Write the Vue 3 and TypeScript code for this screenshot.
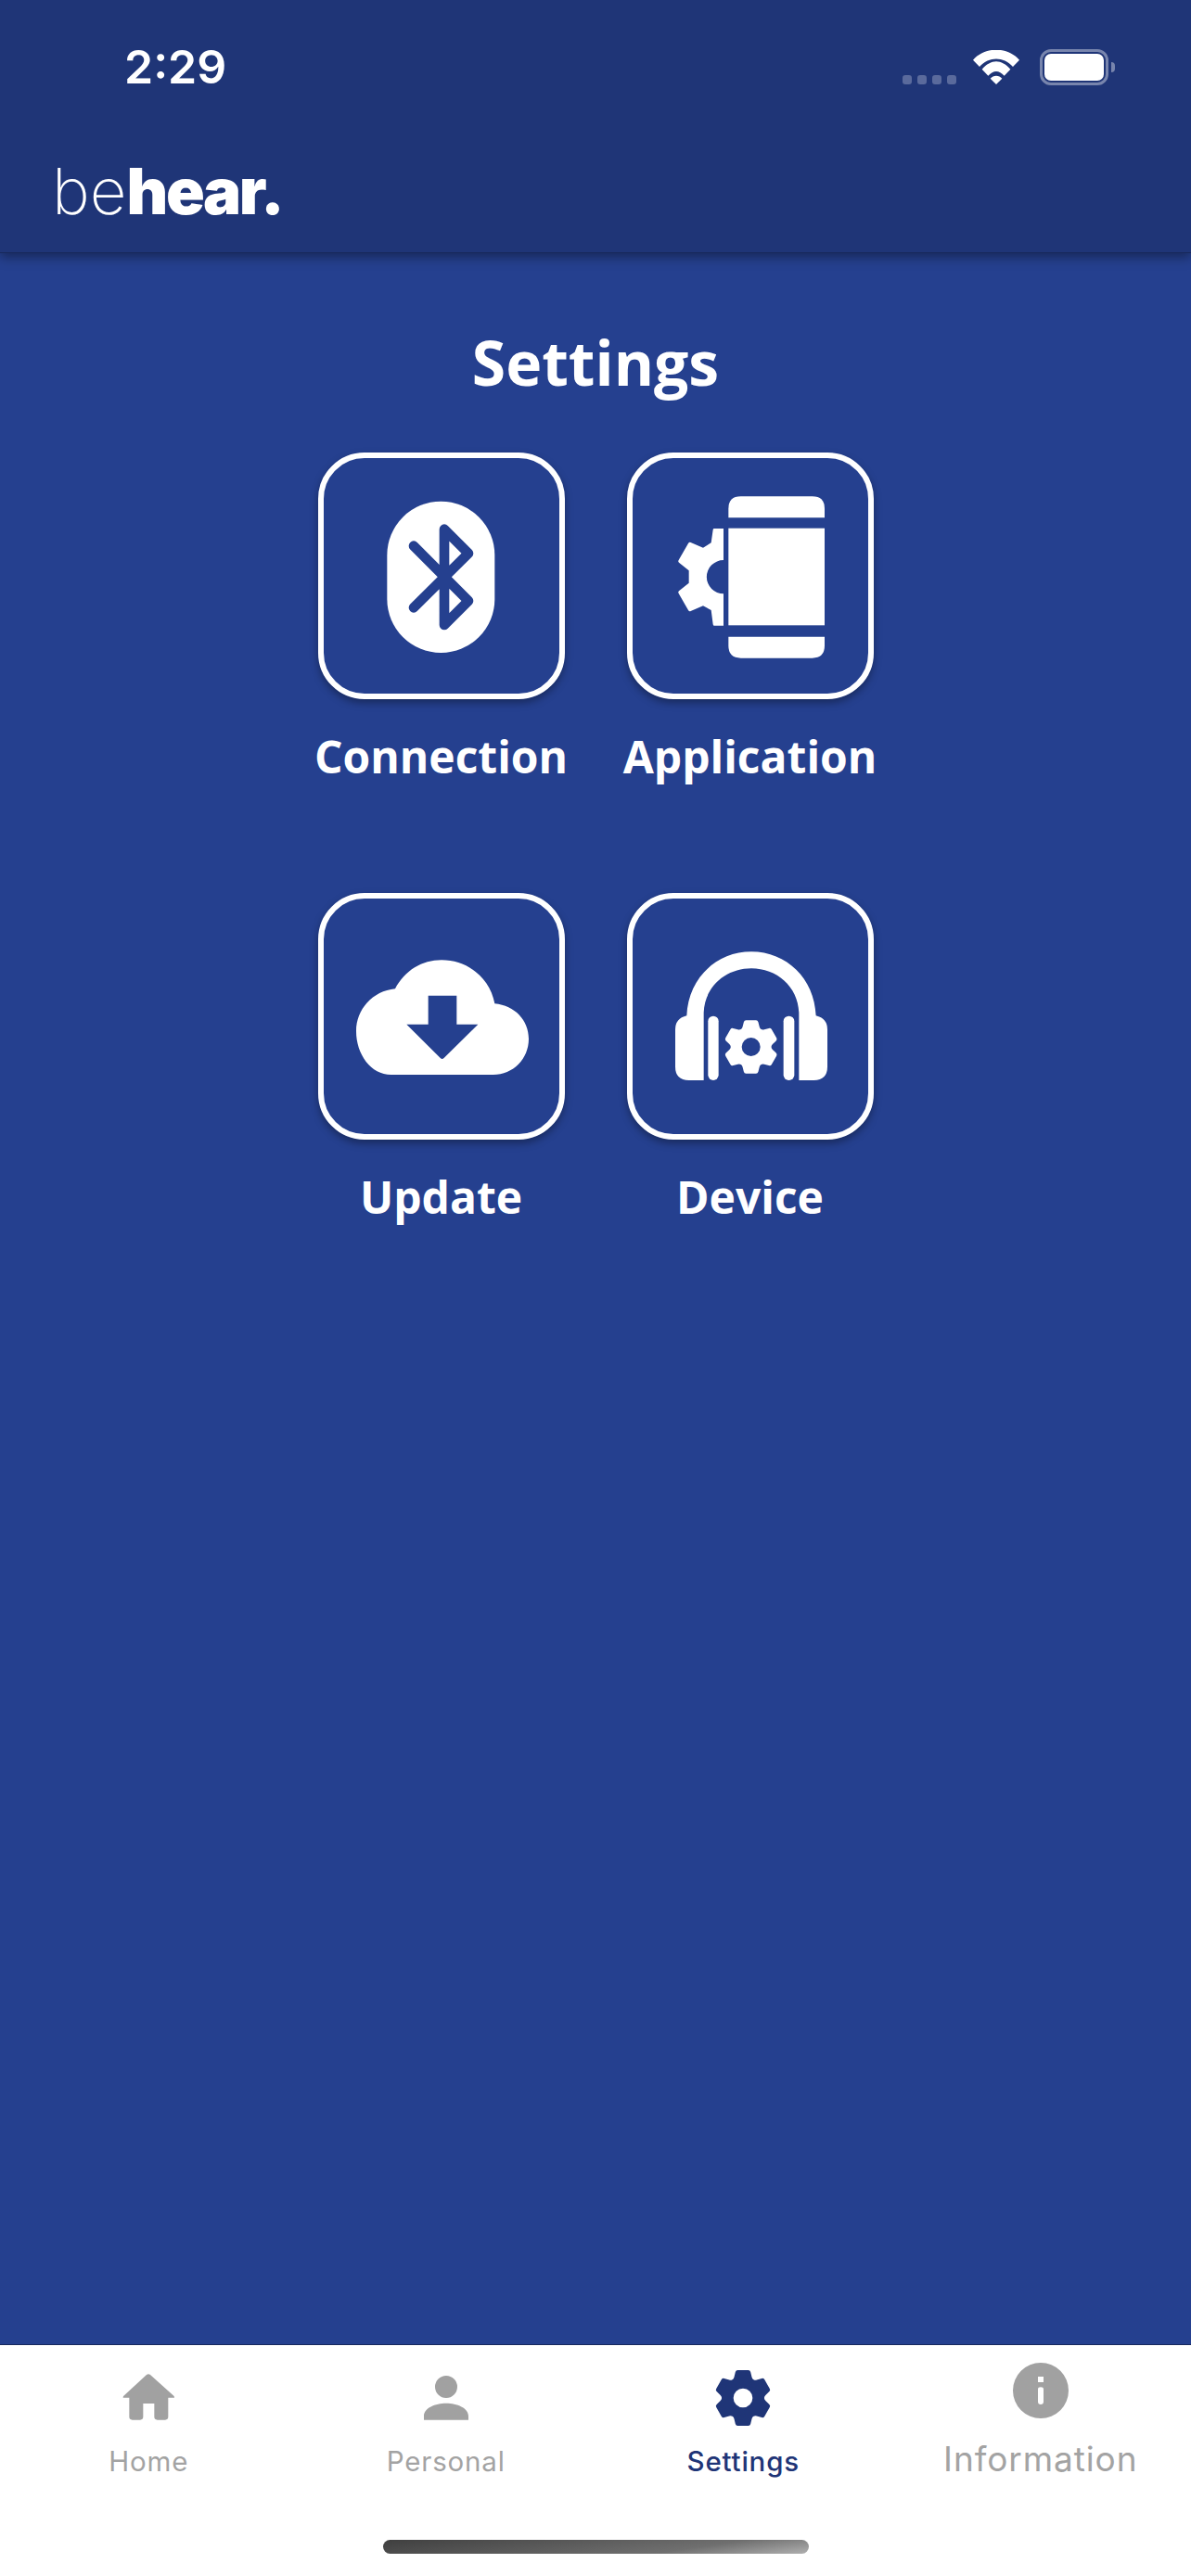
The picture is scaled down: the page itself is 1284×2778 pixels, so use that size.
<script setup lang="ts">
type Pt = [number, number]

// polygon with softened corners, the gears look too sharp without it
function roundedPoly(pts: Pt[], r: number): string {
  let d = ''
  pts.forEach((p, i) => {
    const prev = pts[(i + pts.length - 1) % pts.length]
    const next = pts[(i + 1) % pts.length]
    const toward = (q: Pt): Pt => {
      const len = Math.hypot(q[0] - p[0], q[1] - p[1])
      const k = Math.min(r, len / 2) / len
      return [p[0] + (q[0] - p[0]) * k, p[1] + (q[1] - p[1]) * k]
    }
    const a = toward(prev)
    const b = toward(next)
    d += `${i ? 'L' : 'M'}${a[0].toFixed(1)} ${a[1].toFixed(1)}Q${p[0]} ${p[1]} ${b[0].toFixed(1)} ${b[1].toFixed(1)}`
  })
  return d + 'Z'
}

function circlePath(cx: number, cy: number, r: number): string {
  return `M${cx - r} ${cy}A${r} ${r} 0 1 0 ${cx + r} ${cy}A${r} ${r} 0 1 0 ${cx - r} ${cy}Z`
}

function gearPath(cx: number, cy: number, size: number, hole: number): string {
  const pts: Pt[] = []
  for (let k = 0; k < 6; k++) {
    const a = (k * Math.PI) / 3
    const local: Pt[] = [[-30, -62], [-23, -90], [23, -90], [30, -62]]
    for (const [x, y] of local) {
      const sx = x * size
      const sy = y * size
      pts.push([
        +(cx + sx * Math.cos(a) - sy * Math.sin(a)).toFixed(1),
        +(cy + sx * Math.sin(a) + sy * Math.cos(a)).toFixed(1),
      ])
    }
  }
  return roundedPoly(pts, 6) + circlePath(cx, cy, hole)
}

const tabs = [
  {
    label: 'Home',
    view: '101 39 216 216',
    d: 'M203 78Q209 73 215 78L291 146Q296 152 290 152H273V214Q273 224 263 224H238Q228 224 228 214V171H192V214Q192 224 182 224H157Q147 224 147 214V152H130Q124 152 129 146Z',
    cls: '',
  },
  {
    label: 'Personal',
    view: '1062 39 216 216',
    d: circlePath(1170, 117, 36) + 'M1098 224V212C1098 185 1135 170 1170 170C1205 170 1242 185 1242 212V224Z',
    cls: '',
  },
  {
    label: 'Settings',
    view: '107 39 216 216',
    d: gearPath(215, 153, 1, 31),
    cls: 'tab-active',
  },
  {
    label: 'Information',
    view: '1068 39 216 216',
    d: circlePath(1176, 129, 90) + 'M1167 84H1185V102H1167ZM1167 125Q1167 118 1176 118Q1185 118 1185 125V165Q1185 174 1176 174Q1167 174 1167 165Z',
    cls: 'tab-wide',
  },
]

const headGear = gearPath(413, 506, 0.955, 30)
</script>

<template>
  <div class="screen">
    <header class="top">
      <div class="status">
        <span class="time">2:29</span>
        <div class="status-right">
          <div class="signal"><i /><i /><i /><i /></div>
          <svg class="wifi" viewBox="302 72 150 111">
            <path d="M302 104C340 60 414 60 452 104L431 126C400 92 354 92 323 126Z" />
            <path d="M331 134C360 100 394 100 423 134L403 155C386 136 368 136 351 155Z" />
            <path d="M358 164C368 152 386 152 396 164L377 183Z" />
          </svg>
          <div class="battery"><div class="battery-fill" /></div>
          <div class="battery-nub" />
        </div>
      </div>
      <div class="logo"><span class="logo-thin">be</span><span class="logo-bold">hear.</span></div>
    </header>

    <main class="content">
      <h1 class="title">Settings</h1>
      <div class="grid">
        <div class="item">
          <div class="card">
            <svg viewBox="27 28 762 762">
              <rect x="232" y="168" width="348" height="490" rx="174" fill="#fff" />
              <path
                d="M318 312L495 490L417 568V258L495 336L318 512"
                fill="none"
                stroke="#25408f"
                stroke-width="32"
                stroke-linecap="round"
                stroke-linejoin="round"
              />
            </svg>
          </div>
          <span class="label">Connection</span>
        </div>

        <div class="item">
          <div class="card">
            <svg viewBox="30 28 762 762" fill="#fff">
              <path d="M340 221V192Q340 152 380 152H611Q651 152 651 192V221Z" />
              <rect x="340" y="255" width="311" height="314" />
              <path d="M340 606H651V635Q651 675 611 675H380Q340 675 340 635Z" />
              <path d="M324 256H293Q291 256 290 260L284 302L258 318L218 301Q213 299 210 304L179 358Q176 363 180 366L212 392V432L180 458Q176 461 179 466L210 520Q213 525 218 523L258 506L284 520L290 566Q291 570 293 570H324V467A54 54 0 0 1 324 358Z" />
            </svg>
          </div>
          <span class="label">Application</span>
        </div>

        <div class="item">
          <div class="card">
            <svg viewBox="27 26 762 762">
              <path
                fill="#fff"
                d="M258 318C290 258 345 225 408 225C495 225 565 285 580 366C645 372 690 420 690 480C690 545 640 596 575 596H245C180 596 132 530 132 455C132 385 185 325 258 318Z"
              />
              <path fill="#25408f" d="M365 340H457V433H526L415 543Q410 547 405 543L295 433H365Z" />
            </svg>
          </div>
          <span class="label">Update</span>
        </div>

        <div class="item">
          <div class="card">
            <svg viewBox="30 26 762 762" fill="#fff">
              <path d="M260 614H212Q168 614 168 570V450Q168 414 205 405C210 285 300 198 414 198C528 198 618 285 623 405Q660 414 660 450V570Q660 614 616 614H568V395C565 310 495 252 414 252C333 252 263 310 260 395Z" />
              <rect x="274" y="406" width="34" height="208" rx="17" />
              <rect x="518" y="406" width="35" height="208" rx="17" />
              <path fill-rule="evenodd" :d="headGear" />
            </svg>
          </div>
          <span class="label">Device</span>
        </div>
      </div>
    </main>

    <footer class="tabbar">
      <nav class="tabs">
        <div v-for="tab in tabs" :key="tab.label" class="tab" :class="tab.cls">
          <svg class="tab-icon" :viewBox="tab.view">
            <path fill-rule="evenodd" :d="tab.d" />
          </svg>
          <span class="tab-label">{{ tab.label }}</span>
        </div>
      </nav>
      <div class="home-bar" />
    </footer>
  </div>
</template>

<style>
html,
body {
  margin: 0;
}
</style>

<style scoped>
.screen {
  display: flex;
  flex-direction: column;
  height: 2778px;
  background: #25408f;
  color: #fff;
  font-family: "Open Sans", "Noto Sans", sans-serif;
  overflow: hidden;
}

.top {
  position: relative;
  z-index: 1;
  height: 273px;
  box-sizing: border-box;
  background: #1f3577;
  border-bottom: 1px solid #17285c;
  box-shadow: 0 4px 12px rgba(0, 0, 0, 0.4);
}

.status {
  display: flex;
  justify-content: space-between;
  align-items: flex-start;
  padding: 42px 82px 0 134px;
}

.time {
  font-family: Inter, "Liberation Sans", sans-serif;
  font-size: 50px;
  font-weight: 600;
  line-height: 60px;
}

.status-right {
  display: flex;
  align-items: flex-start;
  padding-top: 11px;
}

.signal {
  display: flex;
  gap: 6px;
  margin-top: 28px;
  margin-right: 18px;
}

.signal i {
  width: 10px;
  height: 10px;
  border-radius: 3px;
  background: #5a6a9c;
}

.wifi {
  width: 50px;
  height: 37px;
  margin-top: 1px;
  margin-right: 22px;
  fill: #fff;
}

.battery {
  width: 74px;
  height: 39px;
  box-sizing: border-box;
  border: 3px solid #7885ad;
  border-radius: 12px;
  padding: 2px;
}

.battery-fill {
  height: 100%;
  border-radius: 7px;
  background: #fff;
}

.battery-nub {
  width: 4px;
  height: 11px;
  margin-top: 14px;
  margin-left: 3px;
  border-radius: 0 4px 4px 0;
  background: #7885ad;
}

.logo {
  margin-top: 64px;
  padding-left: 56px;
  font-family: Inter, Roboto, sans-serif;
  font-size: 69px;
  line-height: 80px;
  white-space: nowrap;
}

.logo-thin {
  font-weight: 200;
  letter-spacing: 0;
}

.logo-bold {
  font-weight: 900;
  letter-spacing: -2.4px;
}

.content {
  flex: 1;
  display: flex;
  flex-direction: column;
  align-items: center;
}

.title {
  margin: 77px 0 0;
  font-size: 66px;
  font-weight: 700;
  line-height: 80px;
}

.grid {
  display: grid;
  grid-template-columns: 266px 266px;
  column-gap: 67px;
  row-gap: 111.5px;
  margin-top: 58px;
}

.item {
  display: flex;
  flex-direction: column;
  align-items: center;
}

.card {
  width: 266px;
  height: 266px;
  box-sizing: border-box;
  border: 6px solid #fff;
  border-radius: 50px;
  box-shadow: 0 4px 8px rgba(0, 0, 0, 0.35);
}

.card svg {
  display: block;
  width: 254px;
  height: 254px;
}

.label {
  margin-top: 27px;
  font-size: 48px;
  font-weight: 700;
  line-height: 70px;
  white-space: nowrap;
}

.tabbar {
  display: flex;
  flex-direction: column;
  align-items: center;
  height: 250px;
  box-sizing: border-box;
  border-top: 1px solid #17285c;
  background: #fff;
}

.tabs {
  display: grid;
  grid-template-columns: repeat(4, 1fr);
  width: 1282px;
  margin-right: 2px;
  padding-top: 19px;
}

.tab {
  display: flex;
  flex-direction: column;
  align-items: center;
  color: #a3a3a3;
  fill: #a1a1a1;
  font-family: Inter, Roboto, sans-serif;
}

.tab-icon {
  display: block;
  width: 72px;
  height: 72px;
}

.tab-label {
  margin-top: 20px;
  font-size: 29.5px;
  line-height: 1;
  letter-spacing: 0.8px;
  white-space: nowrap;
}

.tab-active {
  color: #1f3577;
  fill: #1f3577;
}

.tab-active .tab-label {
  font-weight: 500;
}

.tab-wide .tab-label {
  margin-top: 13px;
  font-size: 37px;
  letter-spacing: 0.9px;
}

.home-bar {
  width: 459px;
  height: 15px;
  margin-top: auto;
  margin-bottom: 24px;
  border-radius: 8px;
  background: linear-gradient(172deg, #3f3f3f 0%, #6f6f6f 70%, #b0b0b0 100%);
}
</style>
